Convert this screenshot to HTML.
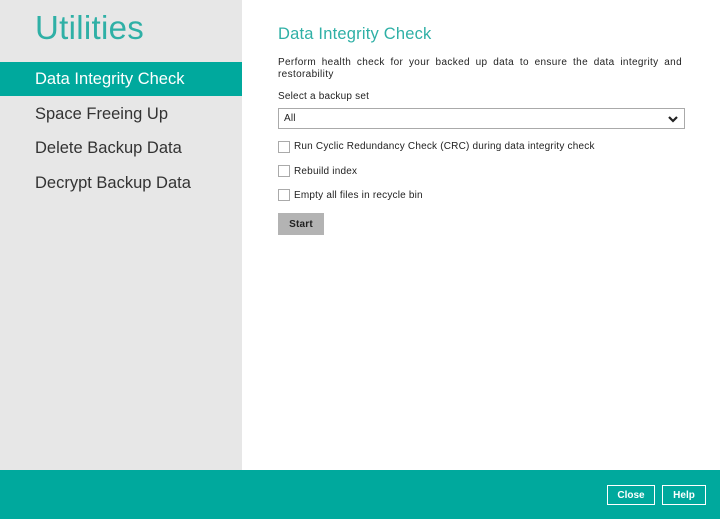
<!DOCTYPE html>
<html><head><style>
body{margin:0;width:720px;height:519px;position:relative;overflow:hidden;background:#fff;font-family:"Liberation Sans",sans-serif;}
.side{position:absolute;left:0;top:0;width:242px;height:470px;background:#e7e7e7;}
.side h1{position:absolute;left:35px;top:9px;margin:0;font-weight:normal;font-size:33px;color:#2fb0a6;letter-spacing:0.3px;}
.item{position:absolute;left:0;width:242px;height:34px;line-height:34px;padding-left:35px;box-sizing:border-box;font-size:16.5px;color:#333;}
.sel{background:#00a99d;color:#fff;}
.main{position:absolute;left:278px;top:0;width:406px;font-size:10px;color:#222;letter-spacing:0.2px;}
h2{position:absolute;top:25px;margin:0;font-weight:normal;font-size:16.5px;color:#2fb0a6;white-space:nowrap;letter-spacing:0.2px;}
.cb{position:absolute;left:0;width:10px;height:10px;border:1px solid #aaa;background:#fff;}
.lab{position:absolute;left:16px;white-space:nowrap;}
.footer{position:absolute;left:0;top:470px;width:720px;height:49px;background:#00a99d;}
.btn{position:absolute;top:15px;height:18px;border:1px solid #fff;color:#fff;font-size:10px;font-weight:bold;text-align:center;line-height:19px;}
</style></head><body>
<div class="side">
<h1>Utilities</h1>
<div class="item sel" style="top:62px">Data Integrity Check</div>
<div class="item" style="top:97px">Space Freeing Up</div>
<div class="item" style="top:131px">Delete Backup Data</div>
<div class="item" style="top:166px">Decrypt Backup Data</div>
</div>
<div class="main">
<h2>Data Integrity Check</h2>
<div style="position:absolute;top:57px;width:404px;text-align:justify;text-align-last:left;line-height:12px;letter-spacing:0.35px">Perform health check for your backed up data to ensure the data integrity and restorability</div>
<div style="position:absolute;top:91px">Select a backup set</div>
<div style="position:absolute;top:108px;width:407px;height:21px;border:1px solid #aaa;box-sizing:border-box;line-height:19px;padding-left:5px">All
<svg style="position:absolute;right:6px;top:6px" width="10" height="8" viewBox="0 0 10 8"><path d="M1 2 L5 6 L9 2" stroke="#222" stroke-width="2.2" fill="none"/></svg></div>
<div class="cb" style="top:141px"></div><div class="lab" style="top:141px">Run Cyclic Redundancy Check (CRC) during data integrity check</div>
<div class="cb" style="top:165px"></div><div class="lab" style="top:166px">Rebuild index</div>
<div class="cb" style="top:189px"></div><div class="lab" style="top:190px">Empty all files in recycle bin</div>
<div style="position:absolute;top:213px;width:46px;height:22px;background:#b3b3b3;font-weight:bold;text-align:center;line-height:23px">Start</div>
</div>
<div class="footer">
<div class="btn" style="left:607px;width:46px">Close</div>
<div class="btn" style="left:662px;width:42px">Help</div>
</div>
</body></html>
